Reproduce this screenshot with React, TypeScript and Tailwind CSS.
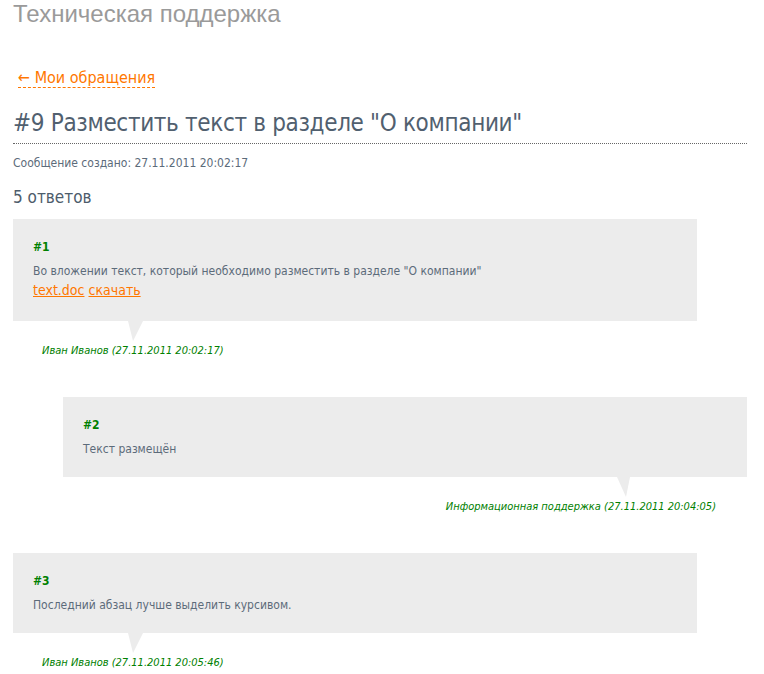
type Reply = {
  num: number;
  text: string;
  files?: { name: string }[];
  author: string;
  side: "left" | "right";
};

const replies: Reply[] = [
  {
    num: 1,
    text: 'Во вложении текст, который необходимо разместить в разделе "О компании"',
    files: [{ name: "text.doc" }],
    author: "Иван Иванов (27.11.2011 20:02:17)",
    side: "left",
  },
  {
    num: 2,
    text: "Текст размещён",
    author: "Информационная поддержка (27.11.2011 20:04:05)",
    side: "right",
  },
  {
    num: 3,
    text: "Последний абзац лучше выделить курсивом.",
    author: "Иван Иванов (27.11.2011 20:05:46)",
    side: "left",
  },
];

const tahoma = "font-['DejaVu_Sans_Condensed','DejaVu_Sans',Tahoma,sans-serif]";

function ReplyCard({ reply }: { reply: Reply }) {
  const right = reply.side === "right";
  return (
    <div className={right ? "ml-[50px] w-[684px]" : "w-[684px]"}>
      <div className="relative bg-[#ececec] px-5 pt-[20px] pb-[20px]">
        <div className="text-[12px] leading-[16px] font-bold text-[#008000]">#{reply.num}</div>
        <div className="mt-[8px] text-[12px] leading-[16px] text-[#5c6b7a]">{reply.text}</div>
        {reply.files && (
          <div className="text-[14px] leading-[22px] text-[#ff7700]">
            {reply.files.map((f) => (
              <span key={f.name}>
                <a href="#" className="underline">{f.name}</a>{" "}
                <a href="#" className="underline">скачать</a>
              </span>
            ))}
          </div>
        )}
        <svg
          className={right ? "absolute top-full left-[554px]" : "absolute top-full left-[115px]"}
          width="16"
          height="21"
          viewBox="0 0 16 21"
        >
          {right ? (
            <polygon points="0,0 13,0 9,20" fill="#ececec" />
          ) : (
            <polygon points="0,0 15,0 5,20" fill="#ececec" />
          )}
        </svg>
      </div>
      <div
        className={
          right
            ? "mt-[23px] pr-[31px] text-right text-[11px] leading-[14px] italic text-[#008000]"
            : "mt-[23px] pl-[29px] text-[11px] leading-[14px] italic text-[#008000]"
        }
      >
        {reply.author}
      </div>
    </div>
  );
}

export default function App() {
  return (
    <div className={`min-h-[674px] bg-white pl-[13px] pr-[17px] ${tahoma}`}>
      <h1 className="font-['Liberation_Sans',Arial,sans-serif] text-[24px] leading-[28px] text-[#9a9a9a]">
        Техническая поддержка
      </h1>

      <div className="mt-[38px] pl-[5px]">
        <a
          href="#"
          className="border-b border-dashed border-[#ff7700] text-[16px] leading-[20px] text-[#ff7700]"
        >
          ← Мои обращения
        </a>
      </div>

      <h2 className="mt-[18px] border-b border-dotted border-[#666] pb-[5px] text-[24px] leading-[30px] tracking-[-0.33px] text-[#51606f]">
        #9 Разместить текст в разделе "О компании"
      </h2>

      <div className="mt-[12px] text-[12px] leading-[14px] text-[#5c6b7a]">
        Сообщение создано: 27.11.2011 20:02:17
      </div>

      <div className="mt-[17px] text-[17px] leading-[20px] text-[#4d5c6b]">5 ответов</div>

      <div className="mt-[12px] flex flex-col gap-[39px]">
        {replies.map((r) => (
          <ReplyCard key={r.num} reply={r} />
        ))}
      </div>
    </div>
  );
}
